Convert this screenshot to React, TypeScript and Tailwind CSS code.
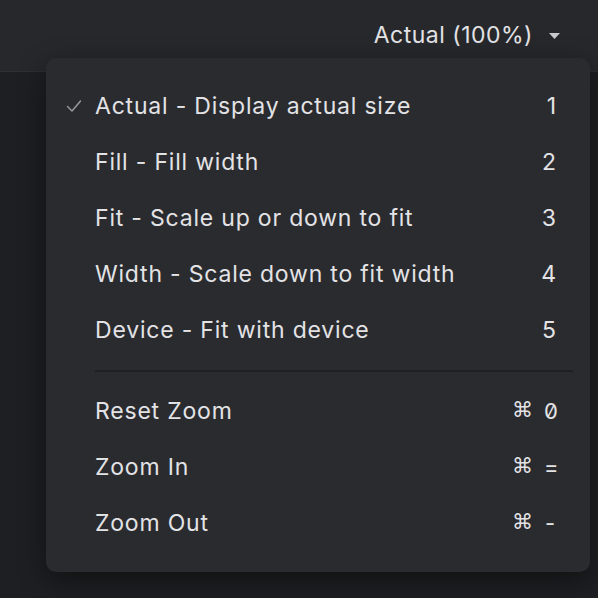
import React from 'react';

const items = [
  { label: 'Actual - Display actual size', key: '1', checked: true },
  { label: 'Fill - Fill width', key: '2' },
  { label: 'Fit - Scale up or down to fit', key: '3' },
  { label: 'Width - Scale down to fit width', key: '4' },
  { label: 'Device - Fit with device', key: '5' },
];

const zoomItems = [
  { label: 'Reset Zoom', key: '0' },
  { label: 'Zoom In', key: '=' },
  { label: 'Zoom Out', key: '-' },
];

const Check = () => (
  <svg width="16" height="14" viewBox="0 0 16 14" fill="none" className="text-[#9c9da3]">
    <path d="M1.5 7.5l4.5 4.5 8.5-10" stroke="currentColor" strokeWidth="1.4" strokeLinecap="round" strokeLinejoin="round" />
  </svg>
);

export default function App() {
  return (
    <div className="relative w-[598px] h-[598px] bg-[#1e1f22] overflow-hidden font-['Inter','Noto_Sans',sans-serif] text-[#e3e3e6]">
      <div className="h-[72px] bg-[#27282c] border-b border-[#2e2f33] flex items-center justify-end pr-[38px]">
        <span className="text-[23px] tracking-[0.5px]">Actual (100%)</span>
        <svg width="11" height="7" viewBox="0 0 11 7" className="ml-[16px] mt-[1px]">
          <path d="M0 0h11L5.5 6z" fill="#c9c9cd" />
        </svg>
      </div>

      <div className="absolute left-[46px] top-[58px] w-[544px] rounded-[10px] bg-[#2a2b2f] shadow-[0_8px_28px_rgba(0,0,0,0.45)] pt-[20px] pb-[21px]">
        {items.map((it) => (
          <div key={it.key} className="h-[56px] flex items-center pr-[34px]">
            <div className="w-[49px] flex justify-end pr-[13px]">{it.checked && <Check />}</div>
            <span className="flex-1 text-[23px] tracking-[0.8px]">{it.label}</span>
            <span className="text-[23px]">{it.key}</span>
          </div>
        ))}
        <div className="ml-[49px] mr-[17px] mt-[12px] mb-[11px] h-[2px] bg-[#1f2023]" />
        {zoomItems.map((it) => (
          <div key={it.key} className="h-[56px] flex items-center pl-[49px] pr-[34px]">
            <span className="flex-1 text-[23px] tracking-[0.8px]">{it.label}</span>
            <span className="text-[22px] flex items-center gap-[11px] [font-feature-settings:'zero']">
              <span className="font-['DejaVu_Sans',sans-serif] text-[21px]">⌘</span>
              <span className="w-[12px] text-center">{it.key}</span>
            </span>
          </div>
        ))}
      </div>
    </div>
  );
}
